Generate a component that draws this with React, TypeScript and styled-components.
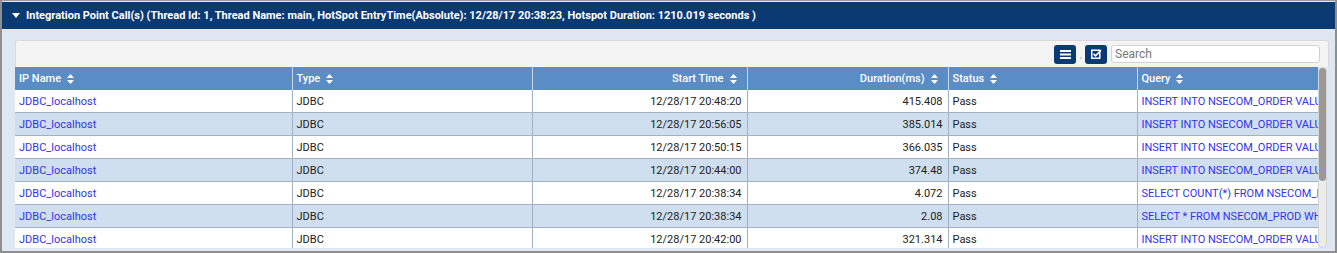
import React from 'react';
import styled, { createGlobalStyle } from 'styled-components';

const GlobalStyle = createGlobalStyle`
  html, body {
    margin: 0;
    padding: 0;
    background: #ffffff;
  }
  body {
    font-family: Roboto, "Liberation Sans", Arial, sans-serif;
  }
`;

type Row = {
  name: string;
  type: string;
  start: string;
  duration: string;
  status: string;
  query: string;
};

const rows: Row[] = [
  { name: 'JDBC_localhost', type: 'JDBC', start: '12/28/17 20:48:20', duration: '415.408', status: 'Pass', query: 'INSERT INTO NSECOM_ORDER VALUES' },
  { name: 'JDBC_localhost', type: 'JDBC', start: '12/28/17 20:56:05', duration: '385.014', status: 'Pass', query: 'INSERT INTO NSECOM_ORDER VALUES' },
  { name: 'JDBC_localhost', type: 'JDBC', start: '12/28/17 20:50:15', duration: '366.035', status: 'Pass', query: 'INSERT INTO NSECOM_ORDER VALUES' },
  { name: 'JDBC_localhost', type: 'JDBC', start: '12/28/17 20:44:00', duration: '374.48', status: 'Pass', query: 'INSERT INTO NSECOM_ORDER VALUES' },
  { name: 'JDBC_localhost', type: 'JDBC', start: '12/28/17 20:38:34', duration: '4.072', status: 'Pass', query: 'SELECT COUNT(*) FROM NSECOM_PROD' },
  { name: 'JDBC_localhost', type: 'JDBC', start: '12/28/17 20:38:34', duration: '2.08', status: 'Pass', query: 'SELECT * FROM NSECOM_PROD WHERE' },
  { name: 'JDBC_localhost', type: 'JDBC', start: '12/28/17 20:42:00', duration: '321.314', status: 'Pass', query: 'INSERT INTO NSECOM_ORDER VALUES' },
];

const columns: { label: string; width: number; right?: boolean }[] = [
  { label: 'IP Name', width: 277 },
  { label: 'Type', width: 240 },
  { label: 'Start Time', width: 215, right: true },
  { label: 'Duration(ms)', width: 201, right: true },
  { label: 'Status', width: 189 },
  { label: 'Query', width: 181 },
];

const Frame = styled.div`
  height: 253px;
  box-sizing: border-box;
  border-top: 1px solid #9a9a9a;
  border-left: 2px solid #8e8e8e;
  border-right: 2px solid #8e8e8e;
  border-bottom: 2px solid #8e8e8e;
  background: #dfe8f2;
  display: flex;
  flex-direction: column;
  overflow: hidden;
`;

const TitleBar = styled.div`
  margin-top: 1px;
  height: 27px;
  background: #0b3a73;
  display: flex;
  align-items: center;
  gap: 6px;
  padding-left: 10px;
  color: #ffffff;
  font-size: 11px;
  font-weight: 700;
  flex-shrink: 0;
`;

const Body = styled.div`
  flex: 1;
  min-height: 0;
  padding: 11px 6px 3px 13px;
  display: flex;
  flex-direction: column;
`;

const Toolbar = styled.div`
  height: 27px;
  box-sizing: border-box;
  background: #f4f4f4;
  border: 1px solid #d9d9d9;
  border-bottom: none;
  border-radius: 3px 3px 0 0;
  display: flex;
  align-items: center;
  justify-content: flex-end;
  padding-right: 8px;
  flex-shrink: 0;
`;

const IconButton = styled.button`
  width: 22px;
  height: 19px;
  padding: 0;
  border: none;
  border-radius: 3px;
  background: #0b3a73;
  display: flex;
  align-items: center;
  justify-content: center;
`;

const Dot = styled.span`
  width: 2px;
  height: 2px;
  margin: 8px 3px 0 4px;
  background: #c4c4c4;
  border-radius: 1px;
`;

const Search = styled.input`
  width: 209px;
  height: 18px;
  box-sizing: border-box;
  margin-left: 4px;
  border: 1px solid #d2d2d2;
  border-radius: 3px;
  background: #ffffff;
  padding: 0 3px;
  font-family: Roboto, "Liberation Sans", Arial, sans-serif;
  font-size: 12px;
  color: #333;
  &::placeholder {
    color: #777;
  }
`;

const GridArea = styled.div`
  flex: 1;
  min-height: 0;
  display: flex;
`;

const TableClip = styled.div`
  width: 1303px;
  overflow: hidden;
  background: #ffffff;
`;

const Table = styled.table`
  border-collapse: collapse;
  table-layout: fixed;
  width: 1303px;
  font-size: 11px;
  color: #222;
`;

const HeadCell = styled.th<{ $right?: boolean }>`
  height: 23px;
  padding: 0 10px 0 4px;
  background: #5a8cc6;
  color: #ffffff;
  font-weight: 500;
  text-align: ${({ $right }) => ($right ? 'right' : 'left')};
  border-left: 1px solid #c6d6e8;
  white-space: nowrap;
  &:first-child {
    border-left: none;
  }
`;

const HeadLabel = styled.span`
  display: inline-flex;
  align-items: center;
  gap: 6px;
`;

const BodyRow = styled.tr<{ $alt: boolean }>`
  background: ${({ $alt }) => ($alt ? '#cfdff0' : '#ffffff')};
  border-bottom: 1px solid #a2b2c6;
`;

const Cell = styled.td<{ $right?: boolean }>`
  height: 22px;
  padding: 0 5px 0 4px;
  text-align: ${({ $right }) => ($right ? 'right' : 'left')};
  border-left: 1px solid #a2b2c6;
  white-space: nowrap;
  overflow: hidden;
  text-overflow: clip;
  &:first-child {
    border-left: none;
  }
`;

const Link = styled.span`
  color: #3232ee;
`;

const ScrollTrack = styled.div`
  width: 9px;
  background: #ececec;
  border: 1px solid #d4d4d4;
  box-sizing: border-box;
  border-radius: 4px;
  display: flex;
  flex-direction: column;
`;

const ScrollThumb = styled.div`
  height: 113px;
  background: #9c9898;
  border-radius: 4px;
`;

const SortIcon = () => (
  <svg width="7" height="10" viewBox="0 0 7 10">
    <path d="M3.5 0L7 4H0z M3.5 10L0 6h7z" fill="#ffffff" />
  </svg>
);

const Caret = () => (
  <svg width="8" height="5" viewBox="0 0 8 5">
    <path d="M0 0h8L4 5z" fill="#ffffff" />
  </svg>
);

const MenuIcon = () => (
  <svg width="11" height="9" viewBox="0 0 11 9">
    <rect x="0" y="0" width="11" height="2" fill="#fff" />
    <rect x="0" y="3.5" width="11" height="2" fill="#fff" />
    <rect x="0" y="7" width="11" height="2" fill="#fff" />
  </svg>
);

const CheckIcon = () => (
  <svg width="11" height="10" viewBox="0 0 11 10">
    <rect x="0.75" y="1.25" width="8" height="8" fill="none" stroke="#fff" strokeWidth="1.5" />
    <path d="M2.5 4.8l2 2L10 1.2" fill="none" stroke="#fff" strokeWidth="1.6" />
  </svg>
);

export default function App() {
  return (
    <>
      <GlobalStyle />
      <Frame>
        <TitleBar>
          <Caret />
          <span>
            Integration Point Call(s) (Thread Id: 1, Thread Name: main, HotSpot EntryTime(Absolute): 12/28/17
            20:38:23, Hotspot Duration: 1210.019 seconds )
          </span>
        </TitleBar>
        <Body>
          <Toolbar>
            <IconButton>
              <MenuIcon />
            </IconButton>
            <Dot />
            <IconButton>
              <CheckIcon />
            </IconButton>
            <Search placeholder="Search" />
          </Toolbar>
          <GridArea>
            <TableClip>
              <Table>
                <colgroup>
                  {columns.map((c) => (
                    <col key={c.label} style={{ width: c.width }} />
                  ))}
                </colgroup>
                <thead>
                  <tr>
                    {columns.map((c) => (
                      <HeadCell key={c.label} $right={c.right}>
                        <HeadLabel>
                          {c.label}
                          <SortIcon />
                        </HeadLabel>
                      </HeadCell>
                    ))}
                  </tr>
                </thead>
                <tbody>
                  {rows.map((r, i) => (
                    <BodyRow key={i} $alt={i % 2 === 1}>
                      <Cell>
                        <Link>{r.name}</Link>
                      </Cell>
                      <Cell>{r.type}</Cell>
                      <Cell $right>{r.start}</Cell>
                      <Cell $right>{r.duration}</Cell>
                      <Cell>{r.status}</Cell>
                      <Cell>
                        <Link>{r.query}</Link>
                      </Cell>
                    </BodyRow>
                  ))}
                </tbody>
              </Table>
            </TableClip>
            <ScrollTrack>
              <ScrollThumb />
            </ScrollTrack>
          </GridArea>
        </Body>
      </Frame>
    </>
  );
}
